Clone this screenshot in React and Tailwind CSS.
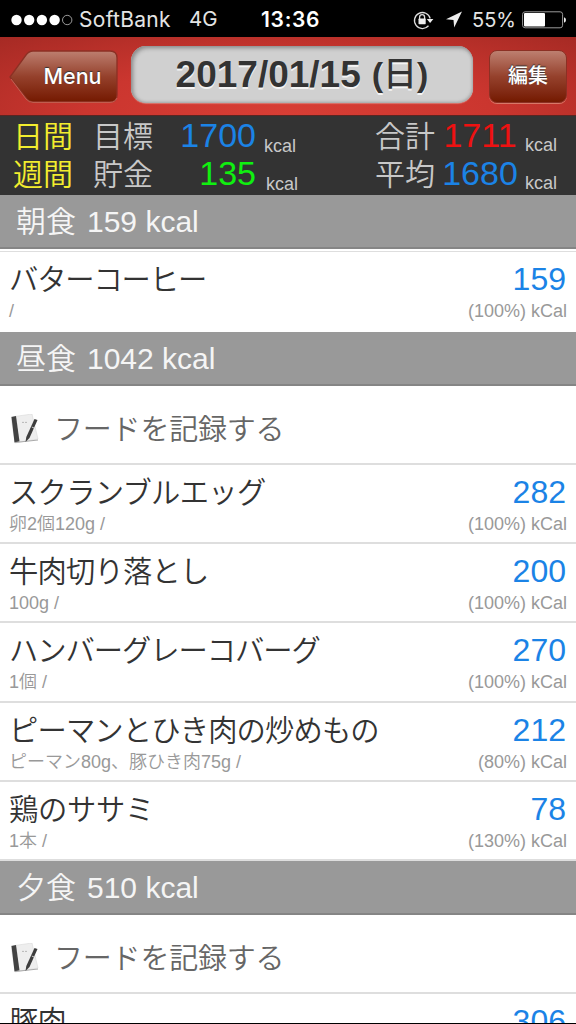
import React from 'react';

const breakfast = [{ name: 'バターコーヒー', note: '/', kcal: 159, rate: 100, tracking: 'tracking-[-1.15px]' }];

const lunch = [
    { name: 'スクランブルエッグ', note: '卵2個120g /', kcal: 282, rate: 100, tracking: 'tracking-[-0.7px]' },
    { name: '牛肉切り落とし', note: '100g /', kcal: 200, rate: 100, tracking: 'tracking-[-0.8px]' },
    { name: 'ハンバーグレーコバーグ', note: '1個 /', kcal: 270, rate: 100, tracking: 'tracking-[-1.05px]' },
    { name: 'ピーマンとひき肉の炒めもの', note: 'ピーマン80g、豚ひき肉75g /', kcal: 212, rate: 80, tracking: 'tracking-[-0.85px]' },
    { name: '鶏のササミ', note: '1本 /', kcal: 78, rate: 130, tracking: 'tracking-[-0.3px]' },
];

const dinner = [{ name: '豚肉', kcal: 306, tracking: 'tracking-[-0.8px]' }];

const StatusBar = () => (
    <div className="flex h-[37px] shrink-0 items-center bg-black pl-[11px] pr-2 pt-[2px] font-['Inter','Liberation_Sans',sans-serif] text-[20px] text-[#e4e4e4]">
        <svg width="62" height="12" viewBox="0 0 62 12" fill="#fff">
            <circle cx="5.5" cy="6" r="5.2" />
            <circle cx="18.2" cy="6" r="5.2" />
            <circle cx="30.9" cy="6" r="5.2" />
            <circle cx="43.6" cy="6" r="5.2" />
            <circle cx="56.2" cy="6" r="4.7" fill="none" stroke="#aaa" strokeWidth="0.9" />
        </svg>
        <span className="ml-[6px] w-[110px] text-[21px] tracking-[0.3px]">SoftBank</span>
        <span className="w-[72px] text-[20.5px]">4G</span>
        <span className="w-[152px] text-[21px] font-semibold tracking-[0.7px] text-white">13:36</span>
        <svg width="21" height="20" viewBox="0 0 21 20" fill="none" stroke="#ddd" strokeWidth="1.3">
            <path d="M15.5 15.8A8 8 0 1 1 17.2 8.5" />
            <path d="M13.8 9h6.6l-3.3 4z" fill="#eee" stroke="none" />
            <path d="M6.6 9V7.2a2.5 2.5 0 0 1 5 0V9" />
            <rect x="5.5" y="8.6" width="7.2" height="5.6" rx="0.6" fill="#eee" stroke="none" />
        </svg>
        <svg className="ml-[11px]" width="18" height="17" viewBox="0 0 18 17" fill="#eee">
            <path d="M17 0.5 9.2 16.5 8.5 9 1 8.3z" />
        </svg>
        <span className="ml-[9px] w-[50px] text-[20px]">55%</span>
        <svg width="44" height="18" viewBox="0 0 44 18">
            <rect x="0.6" y="0.8" width="40" height="16" rx="2.5" fill="none" stroke="#999" strokeWidth="1" />
            <rect x="2" y="2" width="21" height="13.6" rx="1" fill="#fff" />
            <path d="M42 6.2q2 .5 2 2.8t-2 2.8z" fill="#eee" />
        </svg>
    </div>
);

const NavBar = () => (
    <div className="flex h-[79px] shrink-0 items-center border-b border-[#5a2522] bg-[radial-gradient(ellipse_at_center_bottom,#d83e35_0%,#cb362f_50%,#a62a24_100%)] pl-[9px]">
        <button className="relative h-[53px] w-[109px] pl-[18px] text-[21.5px] font-medium text-white [text-shadow:0_-1px_1px_#333] font-['Inter',sans-serif]">
            <svg className="absolute inset-0" width="109" height="53" viewBox="0 0 109 53">
                <defs>
                    <linearGradient id="menu" x1="0" y1="0" x2="0" y2="1">
                        <stop offset="0" stopColor="#bd7f70" />
                        <stop offset="0.5" stopColor="#95412c" />
                        <stop offset="1" stopColor="#741900" />
                    </linearGradient>
                </defs>
                <path d="M24 1H101Q108 1 108 8V45Q108 52 101 52H24Q20 52 17 48L1 27 17 5Q20 1 24 1Z" fill="url(#menu)" stroke="#8c3024" strokeWidth="1.3" />
                <path d="M2 29 17 49Q20 52.4 24 52.4H101Q106 52.4 108 48" fill="none" stroke="#d87867" strokeWidth="0.7" />
            </svg>
            <span className="relative">Menu</span>
        </button>
        <div className="mb-[3px] ml-[13px] flex h-[57px] w-[342px] items-center justify-center whitespace-nowrap rounded-[15px] bg-[#d0d0d0] text-[37px] font-bold text-[#333] shadow-[inset_2px_2px_4px_#888,inset_-1px_-1px_3px_#aaa,0_1px_1px_#d9776f] [text-shadow:0_2px_0_#f4f4f4]">
            <span>2017/01/15</span>
            <span className="ml-[11px] text-[34px]">(<span className="font-medium">日</span>)</span>
        </div>
        <button className="ml-4 h-[53px] w-[78px] rounded-[8px] border border-[#8c3024] bg-linear-to-b from-[#bd7f70] via-[#95412c] to-[#741900] text-[20px] font-medium text-white shadow-[0_1px_0_#d87867] [text-shadow:0_-1px_1px_#333]">
            編集
        </button>
    </div>
);

const SummaryLine = ({ span, label, value, color, label2, value2, color2, unitGap }) => (
    <div className="flex h-[38px] items-baseline text-[30px] font-[350] leading-[38px] text-[#c8c8c8]">
        <span className="w-20 text-[#f3ed2e]">{span}</span>
        <span className="w-[70px]">{label}</span>
        <span className={`w-[93px] text-right text-[34px] ${color}`}>{value}</span>
        <span className={`relative top-[5px] w-[119px] text-[18px] ${unitGap}`}>kcal</span>
        <span className="w-[66px]">{label2}</span>
        <span className={`w-[78px] text-center text-[34px] ${color2}`}>{value2}</span>
        <span className="relative top-1 pl-[6px] text-[18px]">kcal</span>
    </div>
);

const SectionHeader = ({ title }) => (
    <div className="h-[54px] shrink-0 border-b-2 border-[#858585] bg-[#999] pl-4 text-[30px] font-[350] leading-[53px] text-[#f5f5f5]">
        {title.split(' ')[0]}
        <span className="ml-[11px]">{title.split(' ').slice(1).join(' ')}</span>
    </div>
);

const AddRow = () => (
    <div className="flex h-[78.5px] shrink-0 items-center border-b-2 border-[#dedede] pl-[11px] pt-[9px]">
        <svg width="28" height="30" viewBox="0 0 28 30">
            <path d="M0 3 21 0 27 25 4 29z" fill="#eee" stroke="#d5d5d5" strokeWidth="0.5" />
            <path d="M0.5 3 5 2 8.5 27.5 3.5 28.5z" fill="#424242" />
            <path d="M4 28.5 27 26" stroke="#aaa" strokeWidth="1" />
            <path d="M11 8.4h5.5" stroke="#aaa" strokeWidth="0.8" strokeDasharray="2 1" />
            <path d="M23.5 5 26.5 6 18.5 24 14.5 28 15.3 23z" fill="#3d3d3d" />
            <path d="M20.8 13 23 14" stroke="#ccc" strokeWidth="1" />
        </svg>
        <span className="relative top-0.5 ml-[15px] text-[29px] font-[350] tracking-[-0.2px] text-[#666]">フードを記録する</span>
    </div>
);

const FoodRow = ({ food }) => (
    <div className="h-[79.3px] shrink-0 border-b-2 border-[#dedede] pl-[9px] pr-[9px] pt-2">
        <div className="flex h-[38px] items-baseline justify-between leading-[38px]">
            <span className={`text-[29.3px] font-[350] text-[#333] ${food.tracking}`}>{food.name}</span>
            <span className="mr-px text-[32px] text-[#1b83e6]">{food.kcal}</span>
        </div>
        {food.note && (
            <div className="flex h-[26px] items-baseline justify-between text-[18px] font-[350] leading-[26px] text-[#999]">
                <span>{food.note}</span>
                <span>({food.rate}%) kCal</span>
            </div>
        )}
    </div>
);

const App = () => (
    <div className="flex h-[1024px] w-[576px] flex-col overflow-hidden border-b border-black bg-white font-['Liberation_Sans','Noto_Sans_CJK_JP',sans-serif]">
        <StatusBar />
        <NavBar />
        <div className="h-[79px] shrink-0 bg-[#333] pl-[13px]">
            <SummaryLine span="日間" label="目標" value="1700" color="text-[#1b83e6]" unitGap="pl-2" label2="合計" value2="1711" color2="text-[#ee1111]" />
            <SummaryLine span="週間" label="貯金" value="135" color="text-[#10ef10]" unitGap="pl-[10px]" label2="平均" value2="1680" color2="text-[#1b83e6]" />
        </div>
        <SectionHeader title="朝食 159 kcal" />
        <div className="mt-[2px] shrink-0 border-t border-[#dedede] pb-px [&>div]:border-b-0">
            {breakfast.map((food) => <FoodRow key={food.name} food={food} />)}
        </div>
        <SectionHeader title="昼食 1042 kcal" />
        <AddRow />
        {lunch.map((food) => <FoodRow key={food.name} food={food} />)}
        <SectionHeader title="夕食 510 kcal" />
        <AddRow />
        {dinner.map((food) => <FoodRow key={food.name} food={food} />)}
    </div>
);

export default App;
